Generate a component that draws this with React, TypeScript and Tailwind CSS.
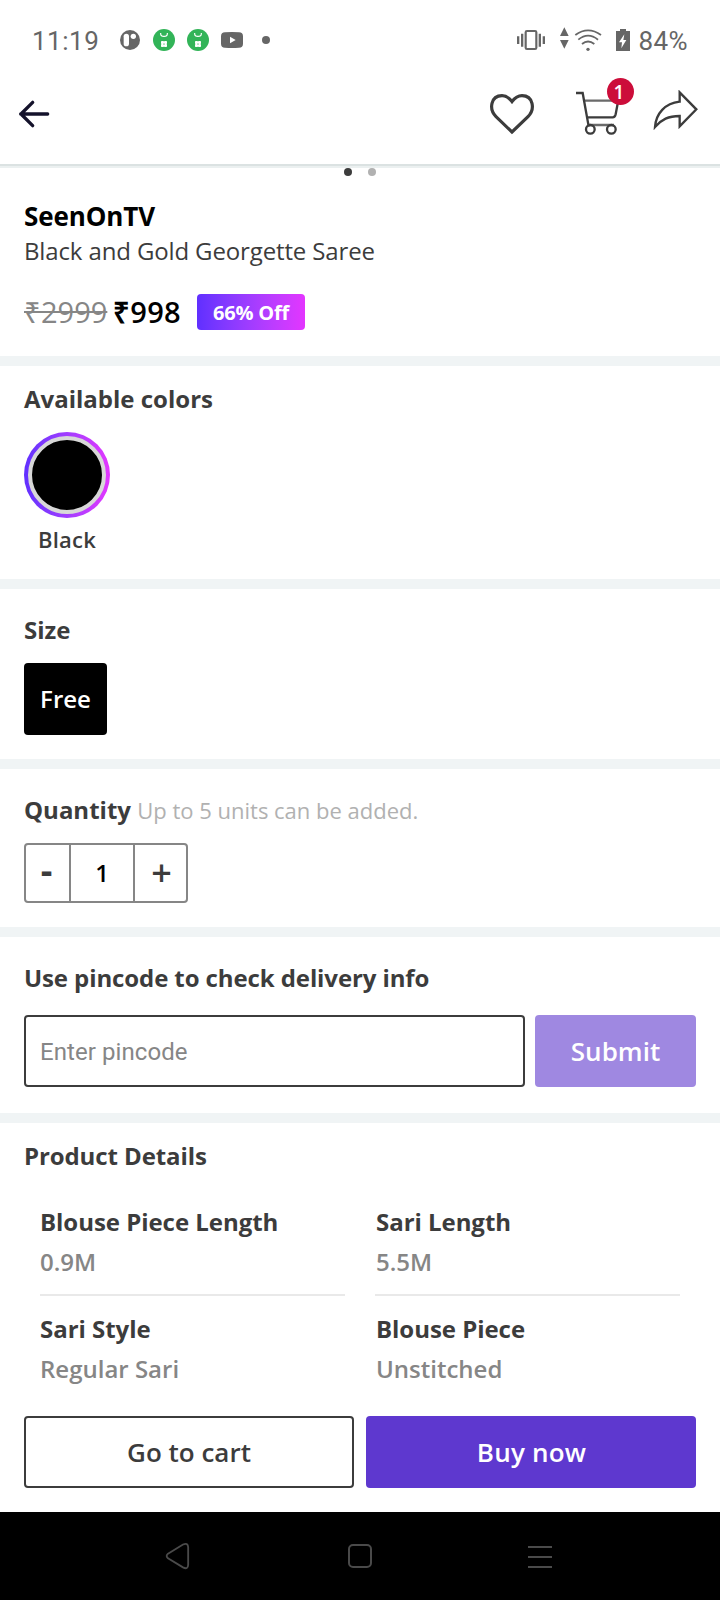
import type { ReactNode } from "react";

function StatusBar() {
  return (
    <div className="flex h-20 items-center pl-8 pr-8 text-[#666666]">
      <span className="w-[76px] pt-0.5 font-[Roboto] text-[26px] leading-8 tracking-[0.5px]">11:19</span>
      <svg className="ml-2 h-6 w-[160px]" viewBox="348 84 480 72" fill="#666666">
        <circle cx="390" cy="120" r="30" />
        <rect x="371" y="101" width="16" height="38" rx="8" fill="#fff" />
        <circle cx="400" cy="109" r="8" fill="#fff" />
        {[492, 594].map((x) => (
          <g key={x}>
            <circle cx={x} cy="120" r="33" fill="#32b458" />
            <path d={`M${x - 10} 99v2q0 8 10 8t10-8v-2`} fill="none" stroke="#fff" strokeWidth="3.5" />
            <rect x={x - 9} y="123" width="9" height="9" rx="2" fill="#fff" />
            <rect x={x} y="123" width="9" height="9" rx="2" fill="#fff" />
            <rect x={x - 9} y="132" width="9" height="9" rx="2" fill="#fff" />
            <rect x={x} y="132" width="9" height="9" rx="2" fill="#fff" />
            <circle cx={x} cy="132" r="1.5" fill="#32b458" />
          </g>
        ))}
        <path d="M675 97Q696 95 717 97Q729 97 729 109V131Q729 143 717 143Q696 145 675 143Q663 143 663 131V109Q663 97 675 97Z" />
        <path d="M690 110l17 10-17 10z" fill="#fff" />
        <circle cx="798" cy="120" r="12" />
      </svg>
      <svg className="ml-auto h-7 w-[116px]" viewBox="168 78 348 84" fill="#666666">
        <rect x="197" y="93" width="32" height="54" rx="4" fill="none" stroke="#666666" strokeWidth="6.500" />
        <path d="M183 101h7v39h-7zM171 109h7v23h-7zM236 101h7v39h-7zM248 109h7v23h-7z" />
        <path d="M300 108l13-26 13 26zM300 120l13 26 13-26z" />
        <g fill="none" stroke="#666666" strokeWidth="5.500">
          <path d="M346 105Q384 77 423 105M355 119Q384 95 414 119M366 132Q384 117 403 132" />
        </g>
        <circle cx="384" cy="148" r="5" />
        <path d="M468 93h12v-6h18v6h12v60h-42z" />
        <path d="M493 103l-16 24h9l-2 18 15-25h-9z" fill="#fff" />
      </svg>
      <span className="ml-[7px] pt-0.5 font-[Roboto] text-[26px] leading-8 tracking-[0.4px]">84%</span>
    </div>
  );
}

function Header() {
  return (
    <div className="flex h-[84px] items-start">
      <svg className="ml-[18px] mt-[18px] h-8 w-8" viewBox="54 294 96 96" fill="none" stroke="#14122b" strokeWidth="10" strokeLinecap="round" strokeLinejoin="round">
        <path d="M143 342H62M98 307L63 342l35 35" />
      </svg>
      <svg className="ml-auto mt-[10px] h-12 w-[52px]" viewBox="78 270 156 144" fill="none" stroke="#3c3c3c" strokeWidth="9.500">
        <path d="M156 396L108 350C86 328 92 287 126 287C142 287 150 297 156 305C162 297 170 287 186 287C220 287 226 328 204 350Z" />
      </svg>
      <div className="relative ml-9 mt-[10px] h-[46px] w-12">
        <svg className="h-[46px] w-12" viewBox="342 270 144 138" fill="none" stroke="#3c3c3c" strokeWidth="7">
          <path d="M375 302H474M386 375H462" stroke="#6a6a6a" />
          <path d="M348 279H368L386 379M379 352H458Q465 352 467 343L474 305" />
          <circle cx="391" cy="388" r="13" />
          <circle cx="454" cy="388" r="13" />
        </svg>
        <span className="absolute -top-3 left-[33px] flex h-[27px] w-[27px] items-center justify-center rounded-full bg-[#cc0d3a] pr-[3px] pt-0.5 text-[19px] font-semibold leading-none text-white">1</span>
      </div>
      <svg className="ml-[30px] mr-5 mt-[10px] h-10 w-[48px]" viewBox="576 270 144 120" fill="none" stroke="#3c3c3c" strokeWidth="7">
        <path d="M585 381C588 340 615 310 659 305V277L709 328L659 379V348C625 348 605 358 585 381Z" />
      </svg>
    </div>
  );
}

function Section({ className, title, children }: { className: string; title: ReactNode; children: ReactNode }) {
  return (
    <section className={`border-t-[10px] border-[#f0f4f5] px-6 ${className}`}>
      <h2 className="text-[24px] font-bold leading-8 text-[#3c3c3c]">{title}</h2>
      {children}
    </section>
  );
}

function Detail({ label, value, line, right }: { label: string; value: string; line?: boolean; right?: boolean }) {
  return (
    <div className={`h-[90px] w-[305px] ${line ? "border-b-2 border-[#e9e9e9]" : ""} ${right ? "pl-px" : ""}`}>
      <div className="text-[24px] font-bold leading-8 tracking-[-0.04px] text-[#3c3c3c]">{label}</div>
      <div className="mt-2 text-[24px] font-semibold leading-8 text-[#868686]">{value}</div>
    </div>
  );
}

export default function App() {
  return (
    <div className="flex h-[1600px] w-[720px] flex-col overflow-hidden bg-white font-['Open_Sans',sans-serif]">
      <StatusBar />
      <Header />
      <div className="h-1 shrink-0 border-t-2 border-[#dbe2e2] bg-[#ebf0f0]" />
      <main className="h-[1222px] shrink-0 overflow-hidden">
        <section className="h-[188px] px-6">
          <div className="flex h-2 justify-center gap-4">
            <i className="h-2 w-2 rounded-full bg-[#3c3c3c]" />
            <i className="h-2 w-2 rounded-full bg-[#b1b1b1]" />
          </div>
          <h1 className="mt-[22px] text-[26px] font-bold leading-9 tracking-[-0.1px] text-black">SeenOnTV</h1>
          <p className="mt-px text-[24px] leading-8 tracking-[-0.13px] text-[#3c3c3c]">Black and Gold Georgette Saree</p>
          <div className="mt-[25px] flex h-10 items-center">
            <span className="w-[89px] whitespace-nowrap text-[29px] leading-10 text-[#868686]"><s>₹2999</s></span>
            <span className="w-[84px] whitespace-nowrap text-[29px] font-semibold leading-10 tracking-[0.3px] text-black">₹998</span>
            <span className="flex h-9 w-[108px] items-center justify-center rounded bg-linear-to-r from-[#602fff] to-[#e335ff] pt-px text-[20px] font-bold tracking-[-0.2px] text-white">66% Off</span>
          </div>
        </section>
        <Section className="h-[223px] pt-[17px]" title="Available colors">
          <div className="mt-[17px] flex w-[86px] flex-col items-center">
            <div className="h-[86px] w-[86px] rounded-full bg-linear-to-r from-[#602fff] to-[#e335ff] p-1">
              <div className="h-full w-full rounded-full border-4 border-[#d8d8d8] bg-black" />
            </div>
            <span className="mt-[5px] text-[22px] font-semibold leading-8 tracking-[0.2px] text-[#3c3c3c]">Black</span>
          </div>
        </Section>
        <Section className="h-[180px] pt-[25px]" title="Size">
          <button className="mt-[17px] flex h-[72px] w-[83px] items-center justify-center rounded bg-black text-[24px] font-semibold text-white">Free</button>
        </Section>
        <Section className="h-[168px] pt-[25px]" title={<>Quantity <span className="text-[22px] font-normal text-[#b1b1b1]">Up to 5 units can be added.</span></>}>
          <div className="mt-[17px] flex h-[60px] w-[164px] rounded border-2 border-[#868686] text-[24px] text-[#3c3c3c]">
            <button className="w-[45px] border-r-2 border-[#868686] pr-0.5 text-[36px] font-bold leading-[49px]"><span className="block h-14">-</span></button>
            <div className="flex w-16 items-center justify-center border-r-2 border-[#868686] font-semibold text-black">1</div>
            <button className="flex-1 pl-0.5 text-[36px] font-semibold leading-[54px]">+</button>
          </div>
        </Section>
        <Section className="h-[186px] pt-[25px]" title={<span className="tracking-[-0.1px]">Use pincode to check delivery info</span>}>
          <div className="mt-[21px] flex h-[72px] gap-[10px]">
            <input className="w-[501px] rounded border-2 border-[#3c3c3c] px-[14px] pt-[2px] font-[Roboto] text-[24px] tracking-[0.08px] placeholder:text-[#868686]" placeholder="Enter pincode" />
            <button className="flex-1 rounded bg-[#9f88e1] text-[26px] font-semibold text-white">Submit</button>
          </div>
        </Section>
        <Section className="pt-[17px]" title={<span className="tracking-[-0.1px]">Product Details</span>}>
          <div className="mt-[34px] grid grid-cols-[305px_305px] gap-x-[30px] gap-y-[17px] px-4">
            <Detail label="Blouse Piece Length" value="0.9M" line />
            <Detail label="Sari Length" value="5.5M" line right />
            <Detail label="Sari Style" value="Regular Sari" />
            <Detail label="Blouse Piece" value="Unstitched" right />
          </div>
        </Section>
      </main>
      <footer className="flex h-[122px] shrink-0 gap-3 px-6 pt-[26px] text-[26px] font-semibold">
        <button className="h-[72px] w-[330px] rounded border-2 border-[#3c3c3c] text-[#3c3c3c]">Go to cart</button>
        <button className="h-[72px] w-[330px] rounded bg-[#5e38cf] pl-px tracking-[0.2px] text-white">Buy now</button>
      </footer>
      <nav className="flex h-[88px] shrink-0 items-center bg-black">
        <svg className="ml-[164px] h-7 w-[26px]" viewBox="492 456 78 84" fill="none" stroke="#4a4a4a" strokeWidth="5.5">
          <path d="M504 491L549 463.500Q564 457 564.500 472V524Q564 540 549 532L504 505Q496 498 504 491Z" />
        </svg>
        <div className="ml-[158px] h-6 w-6 rounded-[5px] border-2 border-[#4a4a4a]" />
        <div className="ml-[156px] flex w-6 flex-col gap-2 pt-0.5">
          <i className="h-0.5 bg-[#4a4a4a]" />
          <i className="h-0.5 bg-[#4a4a4a]" />
          <i className="h-0.5 bg-[#4a4a4a]" />
        </div>
      </nav>
    </div>
  );
}
